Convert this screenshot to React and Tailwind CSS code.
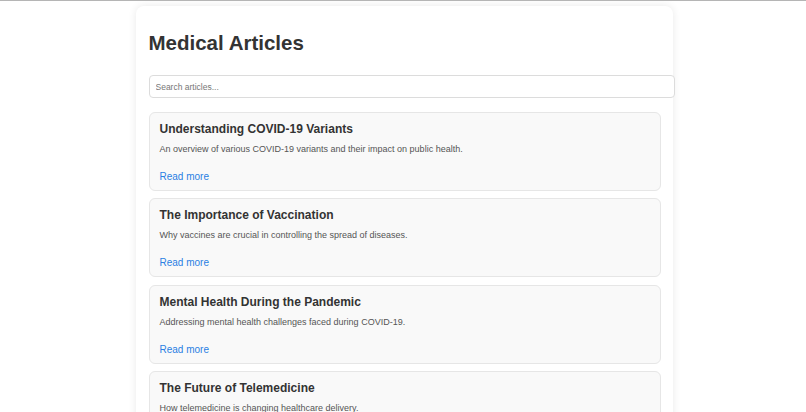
import React from 'react';

const articles = [
  {
    id: 1,
    title: 'Understanding COVID-19 Variants',
    summary: 'An overview of various COVID-19 variants and their impact on public health.',
  },
  {
    id: 2,
    title: 'The Importance of Vaccination',
    summary: 'Why vaccines are crucial in controlling the spread of diseases.',
  },
  {
    id: 3,
    title: 'Mental Health During the Pandemic',
    summary: 'Addressing mental health challenges faced during COVID-19.',
  },
  {
    id: 4,
    title: 'The Future of Telemedicine',
    summary: 'How telemedicine is changing healthcare delivery.',
  },
];

const ArticleCard = ({ article }) => (
  <div className="bg-[#f9f9f9] border border-[#e6e6e6] rounded-[6px] px-[10px] pt-[9px] pb-[7px]">
    <h3 className="text-[12px] leading-[15px] font-bold text-[#333]">{article.title}</h3>
    <p className="mt-[7px] text-[9px] leading-[11px] text-[#555]">{article.summary}</p>
    <a href="#" className="block mt-[16px] text-[10px] leading-[12px] text-[#2a7fe3]">
      Read more
    </a>
  </div>
);

export default function App() {
  return (
    <div className="h-[412px] overflow-hidden bg-white border-t border-[#b5b5b5] pt-[5px] pl-[3px] font-['Liberation_Sans',Arial,sans-serif]">
      <div className="mx-auto w-[537px] bg-white rounded-[8px] shadow-[0_0_8px_rgba(0,0,0,0.09)] px-[12.5px] pt-[25px] pb-[20px]">
        <h1 className="text-[20.5px] leading-[23px] font-bold text-[#333]">Medical Articles</h1>

        {/* Search */}
        <input
          type="text"
          placeholder="Search articles..."
          className="mt-[21px] block w-[526px] h-[23px] border border-[#dcdcdc] rounded-[4px] px-[6px] text-[8.5px] text-[#333] placeholder:text-[#777] outline-none bg-white"
        />

        <div className="mt-[13.5px] flex flex-col gap-[7.5px]">
          {articles.map((a) => (
            <ArticleCard key={a.id} article={a} />
          ))}
        </div>
      </div>
    </div>
  );
}
